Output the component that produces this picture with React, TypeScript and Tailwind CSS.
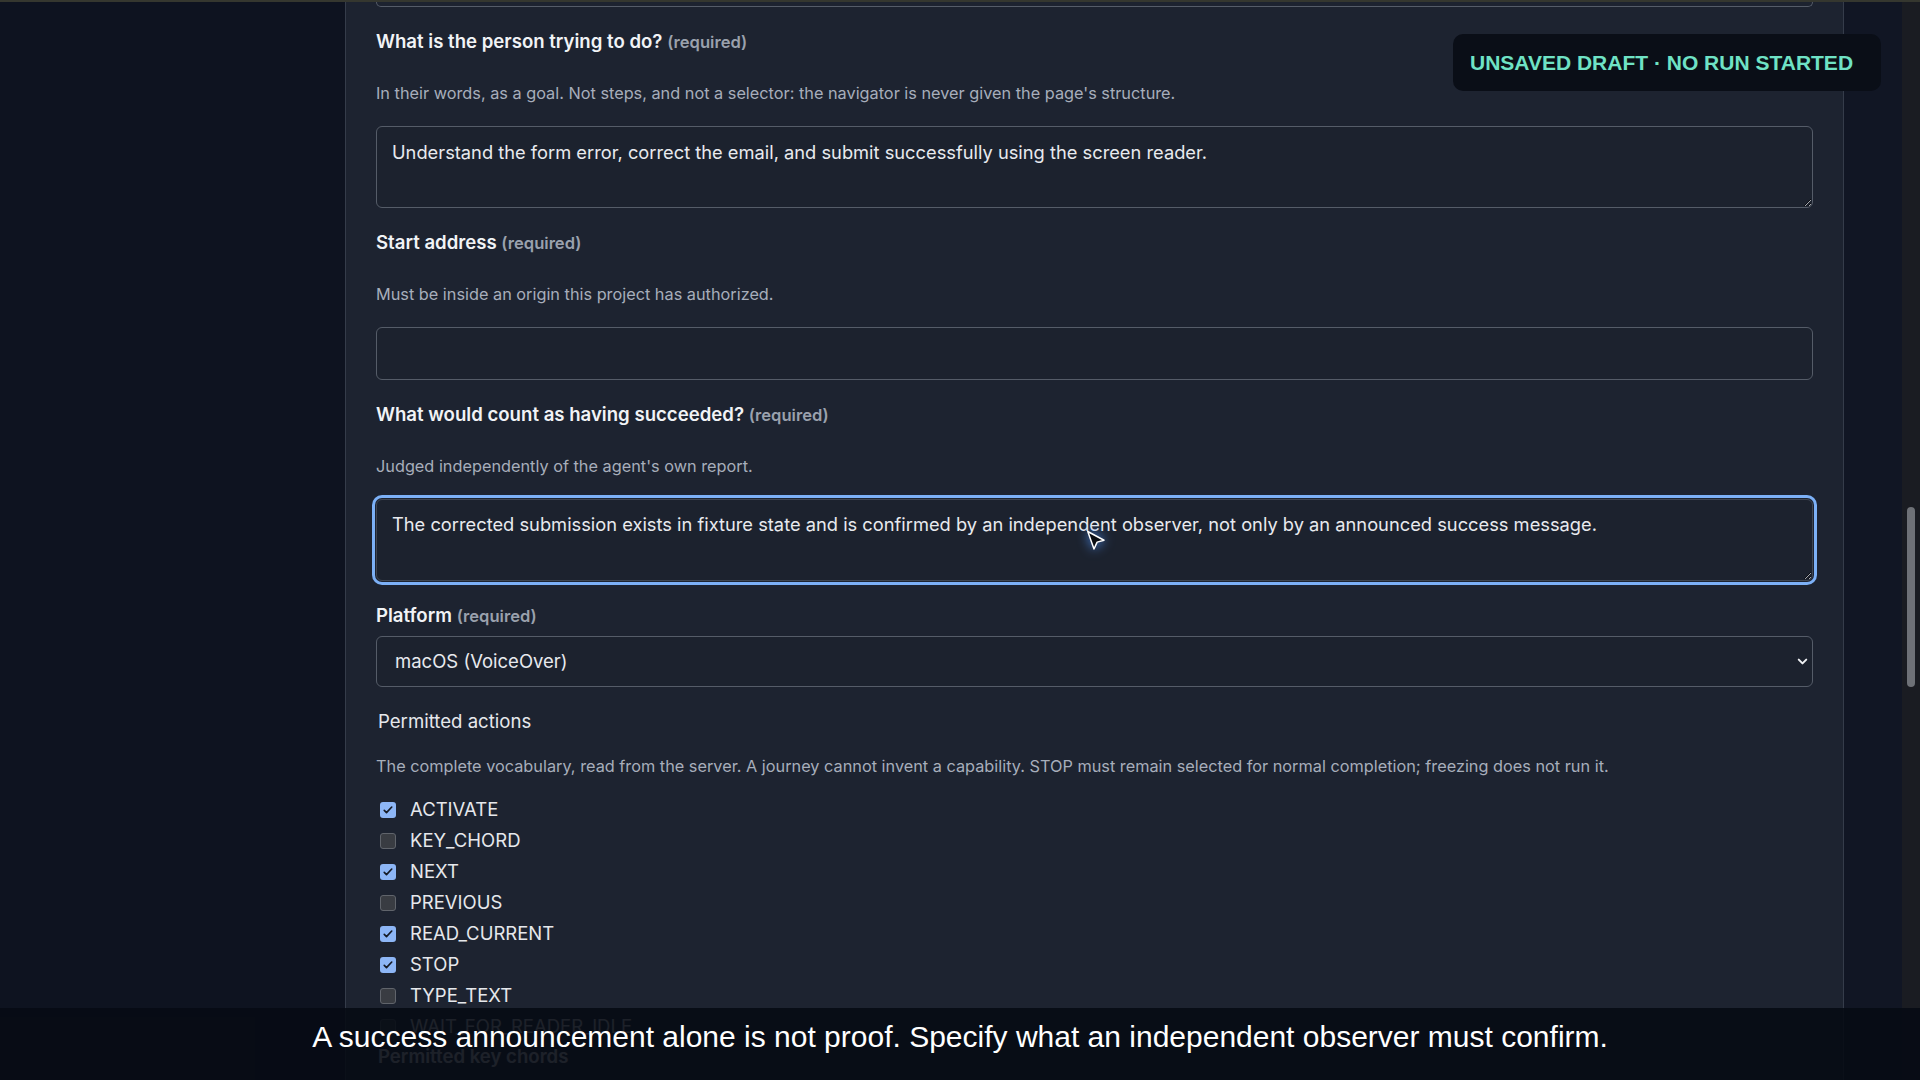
import { ChevronDown } from "lucide-react";

const ACTIONS = [
  { name: "ACTIVATE", on: true },
  { name: "KEY_CHORD", on: false },
  { name: "NEXT", on: true },
  { name: "PREVIOUS", on: false },
  { name: "READ_CURRENT", on: true },
  { name: "STOP", on: true },
  { name: "TYPE_TEXT", on: false },
  { name: "WAIT_FOR_READER_IDLE", on: false },
];

function Label({ text, required = true }: { text: string; required?: boolean }) {
  return (
    <div className="h-6 text-[18.6px] leading-6 font-semibold text-[#f1f3f6]">
      {text}{" "}
      {required && <span className="text-[16.6px] font-semibold text-[#9aa1ad]">(required)</span>}
    </div>
  );
}

function Help({ children, className = "mt-[30px]" }: { children: string; className?: string }) {
  return <p className={`${className} text-[16.3px] leading-5 text-[#a7aebb]`}>{children}</p>;
}

function Box({ checked }: { checked: boolean }) {
  if (checked)
    return (
      <span className="flex h-4 w-4 shrink-0 items-center justify-center rounded-[3px] bg-[#8db6f6]">
        <svg viewBox="0 0 16 16" className="h-3 w-3">
          <path d="M3 8.5l3 3 7-7.5" fill="none" stroke="#151a24" strokeWidth="2.2" strokeLinecap="round" strokeLinejoin="round" />
        </svg>
      </span>
    );
  return <span className="h-4 w-4 shrink-0 rounded-[3px] border border-[#60646b] bg-[#393c42]" />;
}

export default function App() {
  return (
    <div className="relative h-screen w-full overflow-hidden bg-[#0e1320] font-['Inter','Noto_Sans',sans-serif]">
      <div className="h-[2px] bg-[#35372f]" />
      <div className="flex h-[1078px]">
        <aside className="w-[345px] shrink-0 bg-[#0e1320]" />

        <main className="w-[1499px] shrink-0 overflow-hidden border-x border-[#353c4a] bg-[#1d2330] px-[30px]">
          {/* bottom of the previous field */}
          <div className="h-[5px] rounded-b-md border border-t-0 border-[#555c68]" />

          <div className="mt-[22px] flex flex-col gap-[22px]">
            <div>
              <Label text="What is the person trying to do?" />
              <Help>In their words, as a goal. Not steps, and not a selector: the navigator is never given the page's structure.</Help>
              <textarea
                readOnly
                defaultValue="Understand the form error, correct the email, and submit successfully using the screen reader."
                className="mt-[23px] block h-[82px] w-full resize-y rounded-md border border-[#555c68] bg-[#1c222e] px-[15px] pt-[13px] text-[18.3px] leading-6 text-[#e8eaee] outline-none [color-scheme:dark]"
              />
            </div>

            <div>
              <Label text="Start address" />
              <Help>Must be inside an origin this project has authorized.</Help>
              <input
                readOnly
                className="mt-[23px] block h-[53px] w-full rounded-md border border-[#555c68] bg-[#1c222e] px-[15px] text-[18.3px] text-[#e8eaee] outline-none"
              />
            </div>

            <div>
              <Label text="What would count as having succeeded?" />
              <Help>Judged independently of the agent's own report.</Help>
              <textarea
                readOnly
                defaultValue="The corrected submission exists in fixture state and is confirmed by an independent observer, not only by an announced success message."
                className="mt-[23px] block h-[82px] w-full resize-y rounded-md border border-[#3f4652] bg-[#1c222e] px-[15px] pt-[12px] text-[18.3px] leading-6 text-[#e8eaee] shadow-[0_0_0_1px_#1d2330,0_0_0_4px_#7cb0f6] outline-none [color-scheme:dark]"
              />
            </div>

            <div>
              <Label text="Platform" />
              <div className="relative mt-[9px]">
                <select
                  defaultValue="macos"
                  className="block h-[51px] w-full appearance-none rounded-md border border-[#555c68] bg-[#1c222e] px-[18px] text-[18.5px] text-[#e8eaee] outline-none"
                >
                  <option value="macos">macOS (VoiceOver)</option>
                  <option value="windows">Windows (NVDA)</option>
                </select>
                <ChevronDown className="pointer-events-none absolute right-[3px] top-[18px] h-[15px] w-[15px] text-[#eef0f3]" strokeWidth={3.2} />
              </div>
            </div>

            <div>
              <div className="h-6 pl-[2px] text-[18.6px] leading-6 text-[#e6e8ec]">Permitted actions</div>
              <Help className="mt-[23px]">
                The complete vocabulary, read from the server. A journey cannot invent a capability. STOP must remain selected for normal completion; freezing does not run it.
              </Help>
              <ul className="mt-[18px]">
                {ACTIONS.map((a) => (
                  <li key={a.name} className="flex h-[31px] items-center gap-[14px] pl-[4px]">
                    <Box checked={a.on} />
                    <span className="text-[18.5px] text-[#e6e8ec]">{a.name}</span>
                  </li>
                ))}
              </ul>
              <div className="mt-[2px] h-6 pl-[2px] text-[18.6px] leading-6 font-semibold text-[#e6e8ec]">
                Permitted key chords
              </div>
            </div>
          </div>
        </main>

        <div className="flex-1 bg-[#111624]" />
        <div className="flex w-[18px] shrink-0 justify-center bg-[#1a1c22] pt-[505px]">
          <div className="h-[180px] w-[8px] rounded-full bg-[#6e7177]" />
        </div>
      </div>

      {/* status badge */}
      <div className="absolute left-[1453px] top-[34px] flex h-[57px] w-[428px] items-center rounded-[10px] bg-[#0a0e17] pl-[17px] font-['Liberation_Sans',Arial,sans-serif] text-[21px] font-bold text-[#6fe2c5]">
        UNSAVED DRAFT · NO RUN STARTED
      </div>

      {/* mouse pointer */}
      <svg
        viewBox="0 0 24 24"
        className="absolute left-[1079px] top-[524px] h-[30px] w-[30px] drop-shadow-[0_0_6px_rgba(80,150,255,0.9)]"
      >
        <path d="M7 6 L20 13 L14.5 14.5 L12 20 Z" fill="#0b0d12" stroke="#ffffff" strokeWidth="1.2" strokeLinejoin="round" />
      </svg>

      {/* caption */}
      <div className="absolute bottom-0 left-0 right-0 h-[72px] bg-[#070b14]/90 pt-[11px] text-center font-['Liberation_Sans',Arial,sans-serif] text-[30px] leading-9 text-white">
        A success announcement alone is not proof. Specify what an independent observer must confirm.
      </div>
    </div>
  );
}
